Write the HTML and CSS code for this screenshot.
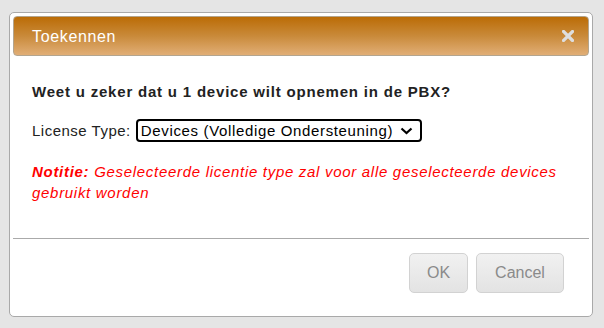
FILE: index.html
```html
<!DOCTYPE html>
<html lang="nl">
<head>
<meta charset="utf-8">
<title>Toekennen</title>
<link rel="stylesheet" href="styles.css">
</head>
<body>
<div class="dialog">
  <div class="header">
    <span class="title">Toekennen</span>
    <svg class="close" width="12" height="12" viewBox="0 0 12 12"><path d="M1.5 1.5 L10.5 10.5 M10.5 1.5 L1.5 10.5" stroke="#dedede" stroke-width="3.2" stroke-linecap="square"/></svg>
  </div>
  <div class="body">
    <p class="question">Weet u zeker dat u 1 device wilt opnemen in de PBX?</p>
    <div class="field">
      <label class="label" for="lt">License Type:</label>
      <span class="select-wrap">
        <select id="lt" class="select"><option>Devices (Volledige Ondersteuning)</option></select>
        <svg class="chev" width="13" height="8" viewBox="0 0 13 8"><path d="M1.5 1.5 L6.5 6 L11.5 1.5" fill="none" stroke="#000" stroke-width="2.2"/></svg>
      </span>
    </div>
    <p class="note"><b>Notitie:</b> Geselecteerde licentie type zal voor alle geselecteerde devices gebruikt worden</p>
  </div>
  <div class="footer">
    <button class="btn btn-ok">OK</button>
    <button class="btn btn-cancel">Cancel</button>
  </div>
</div>
</body>
</html>
```
FILE: styles.css
```css
html, body {
  margin: 0;
  padding: 0;
  background: #e5e5e5;
  font-family: "Liberation Sans", Arial, sans-serif;
}
.dialog {
  box-sizing: border-box;
  width: 584px;
  height: 305px;
  margin: 12px 0 0 9px;
  border: 1px solid #a9a9a9;
  border-radius: 5px;
  padding: 3px;
  background: #fff;
  display: flex;
  flex-direction: column;
}
.header {
  box-sizing: border-box;
  height: 40px;
  border: 1px solid #b3a58f;
  border-radius: 4px;
  background: linear-gradient(#bb6c06, #c98a3a 50%, #e1ae76);
  display: flex;
  align-items: center;
  justify-content: space-between;
  padding: 0 14px 0 18px;
  color: #fff;
  font-size: 16px;
  letter-spacing: 0.65px;
}
.title {
  line-height: 18px;
  padding-top: 1px;
}
.close {
  display: block;
}
.body {
  box-sizing: border-box;
  height: 183px;
  border-bottom: 1px solid #aaa;
  padding: 0 10px 0 19px;
}
.question {
  margin: 27px 0 0;
  font-weight: bold;
  font-size: 15px;
  letter-spacing: 0.8px;
  line-height: 18px;
  color: #222;
}
.field {
  display: flex;
  align-items: center;
  margin-top: 18px;
  height: 23px;
}
.label {
  font-size: 15px;
  letter-spacing: 0.5px;
  color: #222;
  margin-right: 5px;
}
.select-wrap {
  position: relative;
  display: inline-block;
}
.select {
  appearance: none;
  -webkit-appearance: none;
  box-sizing: border-box;
  width: 286px;
  height: 23px;
  border: 2px solid #000;
  border-radius: 4px;
  background: #fff;
  font-family: "Liberation Sans", Arial, sans-serif;
  font-size: 15px;
  letter-spacing: 0.65px;
  color: #000;
  padding: 0 0 0 3px;
  margin: 0;
}
.chev {
  position: absolute;
  right: 9px;
  top: 8px;
  pointer-events: none;
}
.note {
  margin: 19px 0 0;
  color: #f00;
  font-style: italic;
  font-size: 15px;
  letter-spacing: 0.7px;
  line-height: 21px;
}
.footer {
  display: flex;
  justify-content: flex-end;
  gap: 8px;
  padding: 14px 25px 0 0;
}
.btn {
  box-sizing: border-box;
  height: 40px;
  border: 1px solid #d2d2d2;
  border-radius: 5px;
  background: linear-gradient(#f1f1f1, #e3e3e3);
  color: #8a8a8a;
  font-family: "Liberation Sans", Arial, sans-serif;
  font-size: 16px;
  padding: 0;
}
.btn-ok { width: 59px; }
.btn-cancel { width: 88px; }
```
